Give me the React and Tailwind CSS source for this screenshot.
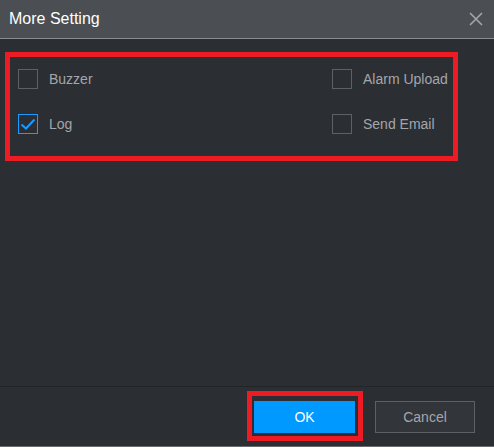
import React, { useState } from "react";

function Check({ label, checked, onToggle }) {
  return (
    <label className="flex h-5 items-center gap-[11px] cursor-pointer" onClick={onToggle}>
      <span
        className={
          "flex h-5 w-5 items-center justify-center border " +
          (checked ? "border-[#1a9bff]" : "border-[#5d6065]")
        }
      >
        {checked && (
          <svg width="16" height="12" viewBox="0 0 16 12" fill="none">
            <path d="M1.5 6.5 L6 10.5 L14.5 1.5" stroke="#1a9bff" strokeWidth="2" />
          </svg>
        )}
      </span>
      <span className="text-[14px] text-[#a3a6ab]">{label}</span>
    </label>
  );
}

export default function App() {
  const [opts, setOpts] = useState({
    buzzer: false,
    alarm: false,
    log: true,
    email: false,
  });
  const flip = (k) => setOpts((o) => ({ ...o, [k]: !o[k] }));

  return (
    <div className="flex h-[447px] w-[494px] flex-col bg-[#2b2e33] font-['Liberation_Sans',Arial,sans-serif]">
      <div className="flex h-[39px] shrink-0 items-center justify-between border-b border-[#8a8c90] bg-[#4b4e53] pl-[9px] pr-[10px]">
        <span className="text-[16px] text-white">More Setting</span>
        <svg width="14" height="14" viewBox="0 0 14 14" className="mr-[1px]">
          <path d="M1 1 L13 13 M13 1 L1 13" stroke="#a4a6aa" strokeWidth="1.6" />
        </svg>
      </div>

      <div className="flex-1 pl-[5px] pt-[13px]">
        <div className="grid h-[109px] w-[453px] grid-cols-[314px_1fr] border-[5px] border-[#ed1c24] pl-[8px] pt-[12px]">
          <div className="flex flex-col gap-[25px]">
            <Check label="Buzzer" checked={opts.buzzer} onToggle={() => flip("buzzer")} />
            <Check label="Log" checked={opts.log} onToggle={() => flip("log")} />
          </div>
          <div className="flex flex-col gap-[25px]">
            <Check label="Alarm Upload" checked={opts.alarm} onToggle={() => flip("alarm")} />
            <Check label="Send Email" checked={opts.email} onToggle={() => flip("email")} />
          </div>
        </div>
      </div>

      <div className="flex h-[61px] shrink-0 items-start justify-end border-t border-b border-t-[#222428] border-b-[#6a6c70] pr-[19px] pt-[4px]">
        <div className="border-[5px] border-[#ed1c24] pb-[3px] pl-[2px] pr-[3px] pt-[5px]">
          <button className="h-[32px] w-[101px] bg-[#0099ff] text-[14px] text-white">OK</button>
        </div>
        <button className="ml-[12px] mt-[10px] h-[32px] w-[100px] border border-[#5d6065] bg-[#32353a] text-[14px] text-[#a3a6ab]">
          Cancel
        </button>
      </div>
    </div>
  );
}
